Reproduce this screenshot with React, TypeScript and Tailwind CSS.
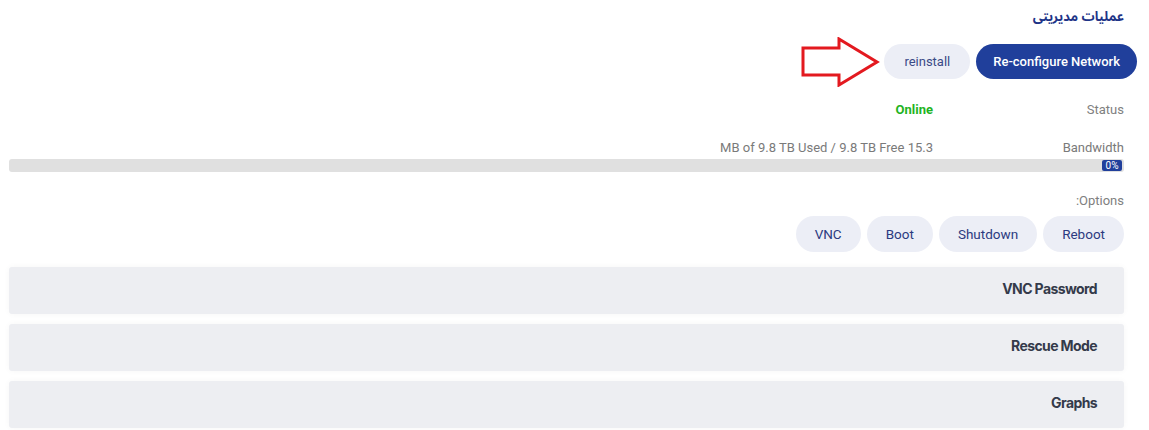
import React from "react";

const Arrow = () => (
  <svg width="80" height="50" viewBox="0 0 80 50" className="shrink-0">
    <polygon
      points="3,11 39,11 39,2 77,25 39,48 39,38 3,38"
      fill="#ffffff"
      stroke="#e3191f"
      strokeWidth="3"
      strokeLinejoin="miter"
    />
  </svg>
);

const PillButton = ({ label }: { label: string }) => (
  <button className="h-[36px] rounded-full bg-[#eceef6] px-[19px] text-[13.5px] text-[#2b3a80]">
    {label}
  </button>
);

const Panel = ({ title }: { title: string }) => (
  <div className="flex h-[47px] items-center rounded-[3px] bg-[#edeef2] pr-[27px] pb-[4px] shadow-[0_0_6px_rgba(0,0,0,0.04)]">
    <span
      className="text-[14px] font-bold tracking-[-0.6px] text-[#343a4a]"
      style={{ fontFamily: "Inter, sans-serif" }}
    >
      {title}
    </span>
  </div>
);

export default function App() {
  return (
    <div
      dir="rtl"
      className="min-h-[430px] w-full bg-white pl-[9px] pr-[25px]"
      style={{ fontFamily: "Roboto, 'Noto Sans Arabic', 'DejaVu Sans', sans-serif" }}
    >
      {/* title */}
      <div className="flex h-[34px] items-center">
        <h2 className="text-[13px] font-bold text-[#1e3487]">عملیات مدیریتی</h2>
      </div>

      {/* actions */}
      <div className="mt-[10px] mr-[-13px] flex h-[35px] items-center gap-[6px]">
        <button className="h-[35px] rounded-full bg-[#203f9b] px-[17px] text-[13px] font-medium text-white">
          Re-configure Network
        </button>
        <button className="h-[35px] rounded-full bg-[#eceef6] px-[20px] text-[13px] text-[#3b4a86]">
          reinstall
        </button>
        <div className="-mr-[2px]">
          <Arrow />
        </div>
      </div>

      {/* status */}
      <div className="mt-[21px] grid h-[20px] grid-cols-[191px_1fr] items-center text-[13px]">
        <span className="text-[#808080]">Status</span>
        <span className="font-bold text-[#1fb41f]">Online</span>
      </div>

      {/* bandwidth */}
      <div className="mt-[18px] grid h-[20px] grid-cols-[191px_1fr] items-center text-[13px]">
        <span className="text-[#7a7a7a]">Bandwidth</span>
        <span className="text-[#7a7a7a]">15.3 MB of 9.8 TB Used / 9.8 TB Free</span>
      </div>
      <div className="mt-[1px] flex h-[13px] items-center rounded-[3px] bg-[#e0e0e0] pr-[2px]">
        <span className="flex h-[11px] w-[20px] items-center justify-center rounded-[2px] bg-[#203f9b] text-[10px] leading-none text-white">
          0%
        </span>
      </div>

      {/* options */}
      <div className="mt-[19px] flex h-[20px] items-center text-[13px] text-[#808080]">Options:</div>
      <div className="mt-[5px] flex gap-[6px]">
        <PillButton label="Reboot" />
        <PillButton label="Shutdown" />
        <PillButton label="Boot" />
        <PillButton label="VNC" />
      </div>

      {/* panels */}
      <div className="mt-[15px] flex flex-col gap-[10px]">
        <Panel title="VNC Password" />
        <Panel title="Rescue Mode" />
        <Panel title="Graphs" />
      </div>
    </div>
  );
}
